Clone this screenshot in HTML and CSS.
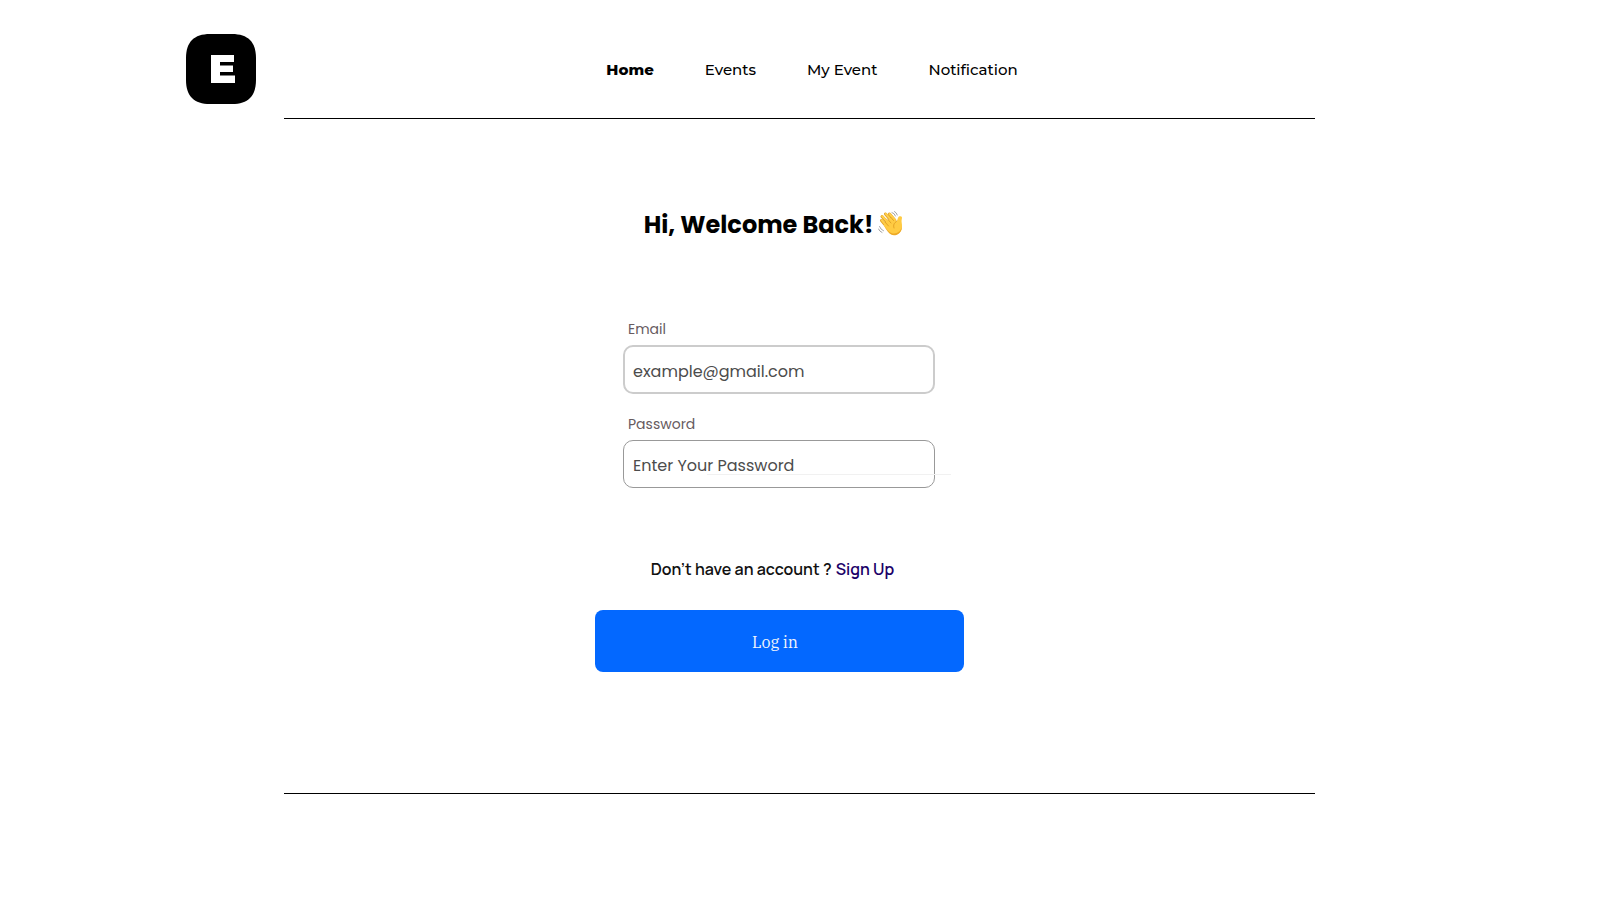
FILE: index.html
```html
<!DOCTYPE html>
<html lang="en">
<head>
<meta charset="utf-8">
<meta name="viewport" content="width=device-width, initial-scale=1">
<title>Log in</title>
<link rel="stylesheet" href="styles.css">
</head>
<body>
<header class="header">
  <a class="logo" href="#" aria-label="Home page">
    <svg class="logo-shape" viewBox="0 0 70 70" aria-hidden="true"><path d="M24 0H46C62 0 70 8 70 24V46C70 62 62 70 46 70H24C8 70 0 62 0 46V24C0 8 8 0 24 0Z M25 21V49H49V41.500H34V38H47V31.500H34V28H48V21Z" fill="#000" fill-rule="evenodd"/></svg>
  </a>
  <nav class="nav">
    <a class="nav-link active" href="#">Home</a>
    <a class="nav-link" href="#">Events</a>
    <a class="nav-link" href="#">My Event</a>
    <a class="nav-link" href="#">Notification</a>
  </nav>
</header>
<hr class="rule">
<main class="main">
  <h1 class="title">Hi, Welcome Back!
    <svg class="wave" viewBox="0 0 25 25" aria-hidden="true">
      <path d="M3.500 9.500 9 16 M4 5.500 11 13 M7.500 3 14 10.500 M11.500 3 17 9.500" fill="none" stroke="#dfa02a" stroke-width="3" stroke-linecap="round"/>
      <path d="M3.700 9.200 9 15.500 M4.300 5.300 11 12.500 M7.800 2.900 14 10 M11.700 3 17 9" fill="none" stroke="#ffcf4a" stroke-width="2" stroke-linecap="round"/>
      <path d="M6 13 14 6 18.500 10.500C20 9 19.500 6 21.500 5.300 23.500 4.700 24.500 6 23.800 8 23 10.500 24.300 13 24 16 23.600 21 20 24 16 24 12.500 24 9.500 20 6 15Z" fill="#ffcb43"/>
      <path d="M6.500 15.500C10 20 12.500 22.500 16 22.500 20 22.500 23 19.500 24 15.500 24 21 20 24.300 16 24.300 12 24.300 9 20 6.500 15.500Z" fill="#eda927"/>
      <path d="M18.500 10.500C16 12 15 14 16 17 M7 11 10.500 15 M9.500 8 13 12 M13 6.500 15.500 9.500" fill="none" stroke="#dc981d" stroke-width=".8" stroke-linecap="round"/>
      <path d="M14 1.500Q16.500 2 17.500 5 M16.500 .500Q18.500 1.500 19.300 4 M1.500 15.500Q2.500 18.500 5.500 19.800 M.500 18Q1.500 20.500 4 21.500" fill="none" stroke="#8e8e8e" stroke-width=".8" stroke-linecap="round"/>
    </svg>
  </h1>
  <form class="form">
    <div class="field">
      <label class="label" for="email">Email</label>
      <input class="input input-email" id="email" type="email" placeholder="example@gmail.com">
    </div>
    <div class="field">
      <label class="label" for="password">Password</label>
      <input class="input" id="password" type="password" placeholder="Enter Your Password">
      <span class="hairline"></span>
    </div>
    <p class="account">Don’t have an account ? <a class="signup" href="#">Sign Up</a></p>
    <button class="submit" type="submit">Log in</button>
  </form>
</main>
<hr class="rule">
</body>
</html>
```
FILE: styles.css
```css
* {
  box-sizing: border-box;
}

body {
  margin: 0;
  background: #fff;
  color: #000;
  font-family: Poppins, Inter, sans-serif;
}

.header {
  display: grid;
  grid-template-columns: 1fr auto 1fr;
  align-items: center;
  padding: 34px 162px 14px 186px;
}

.logo {
  width: 70px;
  height: 70px;
}

.logo-shape {
  display: block;
  width: 100%;
}

.nav {
  display: flex;
  gap: 51px;
  padding-top: 2px;
  font-family: Montserrat, Inter, sans-serif;
  font-size: 15px;
  font-weight: 500;
  line-height: 24px;
}

.nav-link {
  color: #000;
  text-decoration: none;
}

.active {
  font-weight: 800;
}

.rule {
  width: auto;
  height: 1px;
  margin: 0 285px 0 284px;
  border: 0;
  background: #000;
}

.main {
  display: flex;
  flex-direction: column;
  align-items: center;
  padding: 88px 41px 121px 0;
}

.title {
  display: flex;
  align-items: center;
  gap: 5px;
  margin: 0 12px 76px 0;
  font-size: 24px;
  line-height: 36px;
  font-weight: 700;
}

.wave {
  width: 25px;
  height: 25px;
  margin-bottom: 4px;
}

.form {
  width: 100%;
  max-width: 369px;
}

.field {
  position: relative;
  margin: 0 29px 20px 28px;
}

.label {
  display: block;
  padding: 0 5px 6px;
  color: #675b5f;
  font-size: 14px;
  line-height: 20px;
}

.input {
  display: block;
  width: 100%;
  height: 48px;
  padding: 2px 9px 0;
  border: 1px solid #999;
  border-radius: 10px;
  background: transparent;
  font-family: inherit;
  font-size: 16px;
}

.input-email {
  height: 49px;
  padding: 3px 8px 0;
  border: 2px solid #ccc;
}

.input::placeholder {
  color: #4c4c4c;
  opacity: 1;
}

.hairline {
  position: absolute;
  right: -16px;
  bottom: 13px;
  width: 244px;
  height: 1px;
  background: #f1f1f1;
}

.account {
  margin: 69px 14px 29px 0;
  color: #111;
  font-family: Manrope, Inter, sans-serif;
  font-size: 16px;
  line-height: 24px;
  font-weight: 600;
  text-align: center;
}

.signup {
  margin-left: 1px;
  color: #1b0068;
  text-decoration: none;
}

.submit {
  display: block;
  width: 100%;
  height: 62px;
  padding: 2px 9px 0 0;
  border: 0;
  border-radius: 8px;
  background: #0368ff;
  color: #f2f5fb;
  font-family: "IBM Plex Serif", "Noto Serif", "Liberation Serif", serif;
  font-size: 16px;
}
```
